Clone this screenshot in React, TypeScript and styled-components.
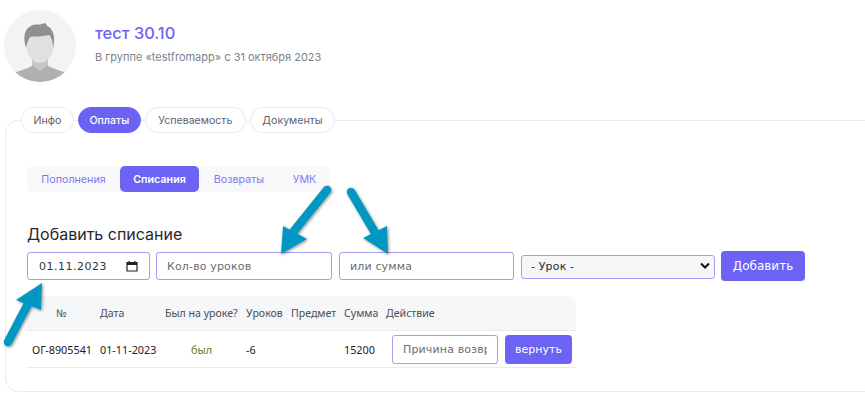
import React from 'react';
import styled, { createGlobalStyle } from 'styled-components';

const Global = createGlobalStyle`
  html, body { margin: 0; padding: 0; background: #fff; }
  body { width: 865px; height: 401px; overflow: hidden; font-family: Inter, "Liberation Sans", sans-serif; }
`;

const accent = '#6c63f5';
const fieldBorder = '#a49cf8';

const Page = styled.div`
  position: relative;
  width: 865px;
  height: 401px;
  overflow: hidden;
  padding: 10px 0 0 4px;
  box-sizing: border-box;
`;
const Header = styled.div`
  display: flex;
  align-items: center;
  gap: 19px;
  height: 72px;
`;
const Avatar = styled.svg`
  width: 72px;
  height: 72px;
  flex: none;
`;
const Name = styled.div`
  color: ${accent};
  font-size: 16.4px;
  font-weight: 500;
  line-height: 20px;
  margin-top: -5px;
`;
const Sub = styled.div`
  color: #7d7f8c;
  font-size: 11px;
  line-height: 14px;
  margin-top: 7px;
`;
const Tabs = styled.div`
  position: relative;
  z-index: 1;
  display: flex;
  gap: 4px;
  margin: 25px 0 0 17px;
`;
const Tab = styled.div<{ $active?: boolean; $pad: number }>`
  height: 26px;
  box-sizing: border-box;
  padding: 0 ${p => p.$pad}px;
  display: flex;
  align-items: center;
  border-radius: 13px;
  font-size: 10.6px;
  background: ${p => (p.$active ? accent : '#fff')};
  color: ${p => (p.$active ? '#fff' : '#5f6170')};
  border: 1px solid ${p => (p.$active ? accent : '#e9ebf3')};
  font-weight: ${p => (p.$active ? 500 : 400)};
`;
const Panel = styled.div`
  margin: -13px -40px 0 1px;
  height: 272px;
  box-sizing: border-box;
  border: 1px solid #e9ebf3;
  border-radius: 14px;
  padding: 45px 0 0 21px;
`;
const SubTabs = styled.div`
  display: flex;
  width: 303px;
  height: 26px;
  background: #f8f8fa;
  border-radius: 5px;
`;
const SubTab = styled.div<{ $active?: boolean; $w: number }>`
  width: ${p => p.$w}px;
  display: flex;
  align-items: center;
  justify-content: center;
  border-radius: 5px;
  font-size: 10.7px;
  color: ${p => (p.$active ? '#fff' : '#7f78f0')};
  background: ${p => (p.$active ? accent : 'transparent')};
  font-weight: ${p => (p.$active ? 600 : 400)};
`;
const Title = styled.div`
  margin-top: 32px;
  font-size: 16px;
  line-height: 20px;
  font-weight: 400;
  color: #26262c;
`;
const FormRow = styled.div`
  display: flex;
  align-items: center;
  margin-top: 7px;
  height: 30px;
`;
const fieldStyles = `
  box-sizing: border-box;
  height: 28px;
  border: 1px solid ${fieldBorder};
  border-radius: 3px;
  background: #fff;
  font-family: "DejaVu Sans", sans-serif;
  font-size: 11px;
  letter-spacing: 0.15px;
  outline: none;
`;
const DateField = styled.div`
  ${fieldStyles}
  letter-spacing: 0.5px;
  width: 123px;
  display: flex;
  align-items: center;
  justify-content: space-between;
  padding: 0 11px;
  color: #33343a;
`;
const TextField = styled.input<{ $w: number; $ml: number }>`
  ${fieldStyles}
  width: ${p => p.$w}px;
  margin-left: ${p => p.$ml}px;
  padding: 0 10px;
  &::placeholder { color: #6b6c72; opacity: 1; }
`;
const SelectBox = styled.div`
  position: relative;
  margin-left: 7px;
  width: 194px;
  height: 24px;
`;
const Select = styled.select`
  ${fieldStyles}
  appearance: none;
  width: 100%;
  height: 24px;
  background: #f6f6f8;
  color: #2a2a30;
  padding: 0 9px;
  font-weight: 400;
`;
const Chevron = styled.svg`
  position: absolute;
  right: 5px;
  top: 8px;
  width: 10px;
  height: 8px;
  pointer-events: none;
`;
const AddButton = styled.button`
  margin-left: 6px;
  width: 84px;
  height: 30px;
  border: 0;
  border-radius: 4px;
  background: ${accent};
  color: #fff;
  font-family: "DejaVu Sans", sans-serif;
  font-size: 12px;
  padding: 0;
`;
const Table = styled.table`
  margin-top: 15px;
  width: 549px;
  table-layout: fixed;
  border-collapse: separate;
  border-spacing: 0;
  font-family: "Noto Sans", "Open Sans", sans-serif;
  font-size: 10.6px;
`;
const Th = styled.th<{ $center?: boolean }>`
  height: 35px;
  box-sizing: border-box;
  padding: 0 0 0 ${p => (p.$center ? 0 : 4)}px;
  background: #f6f7f9;
  border-bottom: 1px solid #e9ebf3;
  color: #4b4c55;
  font-weight: 400;
  text-align: ${p => (p.$center ? 'center' : 'left')};
  &:first-child { border-top-left-radius: 10px; }
  &:last-child { border-top-right-radius: 10px; }
`;
const Td = styled.td<{ $center?: boolean; $green?: boolean }>`
  height: 37px;
  box-sizing: border-box;
  padding: 0 0 0 ${p => (p.$center ? 0 : 4)}px;
  border-bottom: 1px solid #e9ebf3;
  color: ${p => (p.$green ? '#6b7a1e' : '#1f2024')};
  font-size: 10.8px;
  text-align: ${p => (p.$center ? 'center' : 'left')};
  white-space: nowrap;
  &:first-child { padding-left: 5px; }
`;
const ActionCell = styled.div`
  display: flex;
  align-items: center;
  gap: 7px;
  padding-left: 6px;
`;
const ReasonInput = styled.input`
  ${fieldStyles}
  width: 106px;
  height: 29px;
  padding: 0 10px;
  &::placeholder { color: #6b6c72; opacity: 1; }
`;
const ReturnButton = styled.button`
  width: 67px;
  height: 29px;
  border: 0;
  border-radius: 4px;
  background: ${accent};
  color: #fff;
  font-family: "DejaVu Sans", sans-serif;
  font-size: 11px;
  padding: 0;
`;
const Arrows = styled.svg`
  position: absolute;
  left: 0;
  top: 0;
  width: 865px;
  height: 401px;
  pointer-events: none;
  z-index: 2;
`;

const arrows = [
  { tail: '327,190 294,231', head: '283,226 307,239 281,254' },
  { tail: '351,192 377,236', head: '387,226 363,238 388,254' },
  { tail: '8,342 29,302', head: '16,300 41,310 42,283' },
];

export default function App() {
  return (
    <Page>
      <Global />
      <Header>
        <Avatar viewBox="0 0 72 72">
          <defs>
            <clipPath id="round"><circle cx="36" cy="36" r="36" /></clipPath>
          </defs>
          <g clipPath="url(#round)">
            <rect width="72" height="72" fill="#f3f3f3" />
            <path d="M6 64 C14 61 24 59 29 55 L43 55 C49 59 58 61 66 64 L66 72 L6 72 Z" fill="#b0b0b0" />
            <path d="M28 47 L44 47 L44 55 L36 61 L28 55 Z" fill="#c6c6c6" />
            <path d="M22 32 C22 22 50 22 50 32 C50 44 44 53 36 53 C28 53 22 44 22 32 Z" fill="#e0e0e0" />
            <path d="M22 38 C19 28 20 19 27 16 C30 13 36 16 41 13 C42 14 43 15 43 16 C49 18 52 27 49 38 C49 32 48 28 45 25 C38 27 30 26 26 27 C24 30 23 33 22 38 Z" fill="#909090" />
          </g>
        </Avatar>
        <div>
          <Name>тест 30.10</Name>
          <Sub>В группе «testfromapp» с 31 октября 2023</Sub>
        </div>
      </Header>
      <Tabs>
        <Tab $pad={11.5}>Инфо</Tab>
        <Tab $pad={10.5} $active>Оплаты</Tab>
        <Tab $pad={12.5}>Успеваемость</Tab>
        <Tab $pad={11.5}>Документы</Tab>
      </Tabs>
      <Panel>
        <SubTabs>
          <SubTab $w={93}>Пополнения</SubTab>
          <SubTab $w={79} $active>Списания</SubTab>
          <SubTab $w={80}>Возвраты</SubTab>
          <SubTab $w={51}>УМК</SubTab>
        </SubTabs>
        <Title>Добавить списание</Title>
        <FormRow>
          <DateField>
            01.11.2023
            <svg width="12" height="12" viewBox="0 0 12 12">
              <path d="M1 2.5h10v8.5H1z M1 4.5h10" fill="none" stroke="#222" strokeWidth="1.2" />
              <path d="M3.2 1v2 M8.8 1v2" stroke="#222" strokeWidth="1.2" />
              <rect x="1" y="2.5" width="10" height="2" fill="#222" />
            </svg>
          </DateField>
          <TextField $w={176} $ml={6} placeholder="Кол-во уроков" />
          <TextField $w={175} $ml={7} placeholder="или сумма" />
          <SelectBox>
            <Select defaultValue="">
              <option value="">- Урок -</option>
            </Select>
            <Chevron viewBox="0 0 10 8">
              <path d="M1 1.5 L5 5.5 L9 1.5" fill="none" stroke="#111" strokeWidth="2" />
            </Chevron>
          </SelectBox>
          <AddButton>Добавить</AddButton>
        </FormRow>
        <Table>
          <colgroup>
            <col style={{ width: 69 }} />
            <col style={{ width: 65 }} />
            <col style={{ width: 81 }} />
            <col style={{ width: 45 }} />
            <col style={{ width: 53 }} />
            <col style={{ width: 42 }} />
            <col />
          </colgroup>
          <thead>
            <tr>
              <Th $center>№</Th>
              <Th>Дата</Th>
              <Th>Был на уроке?</Th>
              <Th>Уроков</Th>
              <Th>Предмет</Th>
              <Th>Сумма</Th>
              <Th>Действие</Th>
            </tr>
          </thead>
          <tbody>
            <tr>
              <Td>ОГ-8905541</Td>
              <Td>01-11-2023</Td>
              <Td $center $green>был</Td>
              <Td>-6</Td>
              <Td />
              <Td>15200</Td>
              <Td>
                <ActionCell>
                  <ReasonInput placeholder="Причина возврата" />
                  <ReturnButton>вернуть</ReturnButton>
                </ActionCell>
              </Td>
            </tr>
          </tbody>
        </Table>
      </Panel>
      <Arrows viewBox="0 0 865 401">
        <defs>
          <filter id="arrowShadow" x="-30%" y="-30%" width="160%" height="160%">
            <feDropShadow dx="1" dy="1" stdDeviation="1.5" floodColor="#000" floodOpacity="0.45" />
          </filter>
        </defs>
        {arrows.map(a => (
          <g key={a.head} filter="url(#arrowShadow)">
            <polyline points={a.tail} fill="none" stroke="#0398c2" strokeWidth="8.5" strokeLinecap="round" />
            <polygon points={a.head} fill="#0398c2" />
          </g>
        ))}
      </Arrows>
    </Page>
  );
}
